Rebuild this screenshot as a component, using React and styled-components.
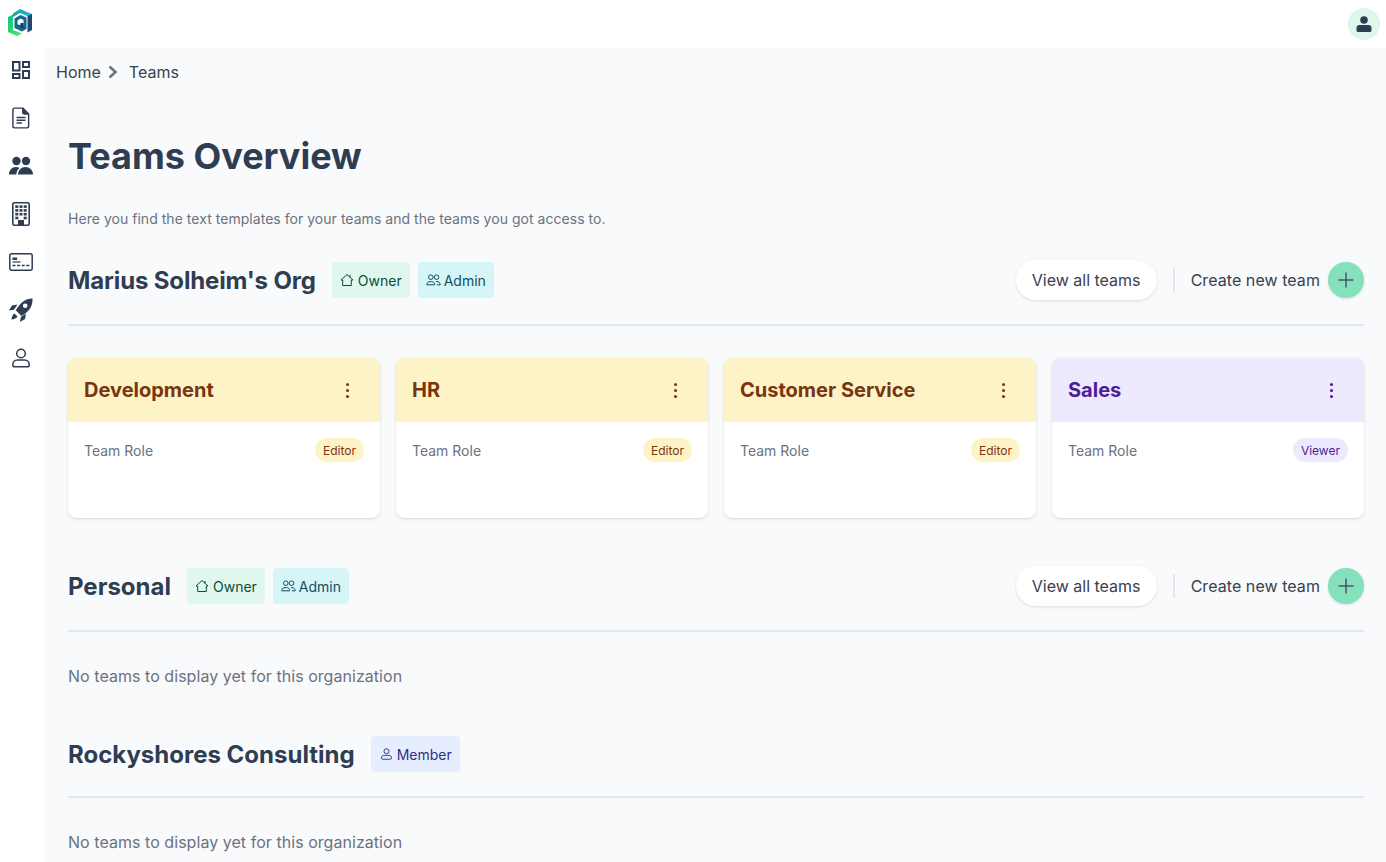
import React from "react";
import styled, { createGlobalStyle } from "styled-components";

const GlobalStyle = createGlobalStyle`
  html, body {
    margin: 0;
    padding: 0;
    height: 862px;
    overflow: hidden;
    background: #ffffff;
    font-family: Inter, "Liberation Sans", sans-serif;
  }
`;

const ROLE_COLORS = {
  Editor: { bg: "#fef3c7", fg: "#78350f" },
  Viewer: { bg: "#ede9fe", fg: "#4c1d95" },
};

const PILL_COLORS = {
  owner: { bg: "#e0f7ed", fg: "#064e3b" },
  admin: { bg: "#d5f5f6", fg: "#164e63" },
  member: { bg: "#e5edff", fg: "#312e81" },
};

const ICON_COLOR = "#2f3d52";

function Logo() {
  return (
    <svg width="24" height="27" viewBox="0 0 24 27">
      <defs>
        <linearGradient id="logoGreen" x1="0" y1="0" x2="0.6" y2="1">
          <stop offset="0" stopColor="#14b8a6" />
          <stop offset="0.5" stopColor="#22d36b" />
          <stop offset="1" stopColor="#4ade80" />
        </linearGradient>
        <linearGradient id="logoTeal" x1="0" y1="0" x2="1" y2="0.4">
          <stop offset="0" stopColor="#0ea5a4" />
          <stop offset="1" stopColor="#22b8cf" />
        </linearGradient>
      </defs>
      <path d="M0 8 L5 5.500 L5 21 L14 24.500 L9 27 L0 23 Z" fill="url(#logoGreen)" />
      <path d="M5 4.500 L12 0 L24 5 L24 9 L18 6.500 L12 4 L5 8 Z" fill="url(#logoTeal)" />
      <path d="M19.500 7 L24 5 L24 21 L19.500 23.500 Z" fill="#1b4a72" />
      <path d="M6.500 9.500 L12.500 6 L18.500 8.500 L18.500 20 L14 22.500 L6.500 19 Z" fill="#12698a" />
      <path d="M9.500 11.500 L12.500 9.500 L15.500 11 L15.500 16.500 L9.500 15.500 Z" fill="#ffffff" />
      <path d="M12.500 14 L15.500 14 L15.500 19.500 L12.500 18 Z" fill="#17375e" />
    </svg>
  );
}

function DashboardIcon() {
  return (
    <svg width="18" height="18" viewBox="0 0 18 18" fill="none" stroke={ICON_COLOR} strokeWidth="2">
      <rect x="1" y="1" width="6.500" height="8.500" />
      <rect x="11" y="1" width="6" height="5" />
      <rect x="1" y="13" width="6.500" height="4" />
      <rect x="11" y="10" width="6" height="7" />
    </svg>
  );
}

function DocumentIcon() {
  return (
    <svg width="18" height="22" viewBox="0 0 20 24" fill="none" stroke={ICON_COLOR} strokeWidth="1.600" strokeLinejoin="round">
      <path d="M3 1h9l6.500 6.500V21a2 2 0 0 1-2 2H3a2 2 0 0 1-2-2V3a2 2 0 0 1 2-2z" />
      <path d="M12 1v4.500a2 2 0 0 0 2 2h4.500" fill={ICON_COLOR} />
      <path d="M5 11.500h10M5 14.500h10M5 17.500h6" />
    </svg>
  );
}

function PeopleIcon() {
  return (
    <svg width="24" height="20" viewBox="0 0 24 20" fill={ICON_COLOR}>
      <circle cx="7.500" cy="5" r="4.200" />
      <circle cx="17" cy="5" r="4.200" />
      <path d="M0 18.500c0-4.200 2.800-7.500 7-7.500 1.400 0 2.600.4 3.600 1-2 1.500-3.200 3.800-3.200 6.500z" />
      <path d="M9 18.500c0-4.200 3.300-7.500 7.500-7.500s7.500 3.300 7.500 7.500z" />
    </svg>
  );
}

function BuildingIcon() {
  const windows = [];
  for (let row = 0; row < 4; row++) {
    for (let col = 0; col < 3; col++) {
      if (row === 3 && col === 1) continue;
      windows.push(<rect key={`${row}-${col}`} x={3.300 + col * 4.200} y={3.300 + row * 3.800} width="3" height="2.600" />);
    }
  }
  return (
    <svg width="18" height="24" viewBox="0 0 18 24" fill={ICON_COLOR}>
      <rect x="0.800" y="0.800" width="16.400" height="22.400" rx="1.500" fill="none" stroke={ICON_COLOR} strokeWidth="1.600" />
      {windows}
      <rect x="6" y="18" width="6" height="5" />
    </svg>
  );
}

function CardIcon() {
  return (
    <svg width="24" height="18" viewBox="0 0 24 18" fill="none" stroke={ICON_COLOR}>
      <rect x="0.800" y="0.800" width="22.400" height="16.400" rx="2" strokeWidth="1.500" />
      <rect x="3.500" y="4.500" width="4.500" height="2.500" fill={ICON_COLOR} stroke="none" />
      <path d="M3.500 9h8" strokeWidth="1.200" />
      <path d="M3.500 12.500h17" strokeWidth="1.300" strokeDasharray="3 1.600" />
    </svg>
  );
}

function RocketIcon() {
  return (
    <svg width="24" height="24" viewBox="0 0 24 24" fill={ICON_COLOR}>
      <path fillRule="evenodd" d="M23.500 0.500c.3 5.500-1.500 10-6 14l-5 3.500-5.800-5.800L10.500 7c3.800-4.600 7.800-6.800 13-6.500zM16.200 5.500a2.300 2.300 0 1 0 .01 4.600 2.300 2.300 0 0 0-.01-4.600z" />
      <path d="M8.500 6.500 3 7.500 0 12.500l5-.8zM17 15.500l-1 5.500-5 3 .8-5z" />
      <path d="M5.500 15.500l3 3c-1 1.800-3.500 2.800-6 3 .2-2.500 1.200-5 3-6z" />
    </svg>
  );
}

function PersonOutlineIcon() {
  return (
    <svg width="18" height="20" viewBox="0 0 18 20" fill="none" stroke={ICON_COLOR} strokeWidth="1.500">
      <circle cx="9" cy="5.500" r="4.300" />
      <path d="M5.500 12h7c2.800 0 4.700 2 4.700 4.500v.5c0 1-.8 1.800-1.800 1.800H2.600c-1 0-1.800-.8-1.800-1.800v-.5C.8 14 2.700 12 5.500 12z" />
    </svg>
  );
}

function HomeGlyph() {
  return (
    <svg width="14" height="14" viewBox="1 0 14 14" fill="none" stroke="currentColor" strokeWidth="1" strokeLinejoin="round" overflow="visible">
      <path d="M1 7 7 1.500 13 7h-1.700v5.500H2.700V7z" />
      <path d="M10 2v2.500" />
    </svg>
  );
}

function GroupGlyph() {
  return (
    <svg width="15" height="12" viewBox="0 0 15 12" fill="none" stroke="currentColor" strokeWidth="1">
      <circle cx="4.800" cy="3.200" r="2.300" />
      <circle cx="10.500" cy="3.200" r="2.300" />
      <path d="M.8 10.800c0-2 1.300-3.200 3.200-3.200h1.500c1.900 0 3.200 1.200 3.200 3.200zM10 7.600h1c1.900 0 3.200 1.200 3.200 3.200H11" />
    </svg>
  );
}

function PersonGlyph() {
  return (
    <svg width="11" height="12" viewBox="0 0 12 13" fill="none" stroke="currentColor" strokeWidth="1">
      <circle cx="6" cy="3.500" r="2.700" />
      <path d="M3.500 8h5c1.700 0 3 1.200 3 2.800 0 .8-.5 1.400-1.300 1.400H1.800C1 12.200.5 11.600.5 10.800.5 9.200 1.800 8 3.500 8z" />
    </svg>
  );
}

const PILL_ICONS = {
  owner: <HomeGlyph />,
  admin: <GroupGlyph />,
  member: <PersonGlyph />,
};

const PILL_LABELS = { owner: "Owner", admin: "Admin", member: "Member" };

const SIDEBAR_ICONS = [
  <DashboardIcon key="dashboard" />,
  <DocumentIcon key="document" />,
  <PeopleIcon key="people" />,
  <BuildingIcon key="building" />,
  <CardIcon key="card" />,
  <RocketIcon key="rocket" />,
  <PersonOutlineIcon key="person" />,
];

const TEAMS = [
  { name: "Development", role: "Editor", tone: "yellow" },
  { name: "HR", role: "Editor", tone: "yellow" },
  { name: "Customer Service", role: "Editor", tone: "yellow" },
  { name: "Sales", role: "Viewer", tone: "purple" },
];

function RolePill({ kind }) {
  return (
    <Pill $kind={kind}>
      <PillIcon>{PILL_ICONS[kind]}</PillIcon>
      {PILL_LABELS[kind]}
    </Pill>
  );
}

function SectionHeader({ title, pills, actions, tight }) {
  return (
    <HeaderRow>
      <OrgTitle $tight={tight}>{title}</OrgTitle>
      <PillGroup>
        {pills.map((kind) => (
          <RolePill key={kind} kind={kind} />
        ))}
      </PillGroup>
      {actions && (
        <Actions>
          <ViewButton>View all teams</ViewButton>
          <ActionDivider />
          <CreateLabel>Create new team</CreateLabel>
          <PlusButton>
            <svg width="16" height="16" viewBox="0 0 16 16" stroke="#475569" strokeWidth="1.500">
              <path d="M8 .5v15M.5 8h15" />
            </svg>
          </PlusButton>
        </Actions>
      )}
    </HeaderRow>
  );
}

function TeamCard({ team }) {
  const yellow = team.tone === "yellow";
  return (
    <Card>
      <CardHead $yellow={yellow}>
        <CardTitle>{team.name}</CardTitle>
        <Dots>
          <span />
          <span />
          <span />
        </Dots>
      </CardHead>
      <CardBody>
        <RoleLabel>Team Role</RoleLabel>
        <RoleBadge $role={team.role}>{team.role}</RoleBadge>
      </CardBody>
    </Card>
  );
}

export default function App() {
  return (
    <>
      <GlobalStyle />
      <Shell>
        <TopBar>
          <LogoSlot>
            <Logo />
          </LogoSlot>
          <Avatar>
            <svg width="16" height="16" viewBox="0 0 16 16" fill={ICON_COLOR}>
              <circle cx="8" cy="4" r="3.800" />
              <path d="M3.500 9h9c1.800 0 3 1.300 3 3v2.200c0 1-.7 1.800-1.700 1.800H2.200C1.200 16 .5 15.200.5 14.200V12c0-1.700 1.200-3 3-3z" />
            </svg>
          </Avatar>
        </TopBar>
        <Columns>
          <Sidebar>
            {SIDEBAR_ICONS.map((icon) => (
              <SideItem key={icon.key}>{icon}</SideItem>
            ))}
          </Sidebar>
          <Main>
            <Breadcrumb>
              <span>Home</span>
              <svg width="12" height="14" viewBox="0 0 12 14" fill="none" stroke="#6b7280" strokeWidth="2.500">
                <path d="M2.500 1.500 8.500 7l-6 5.500" />
              </svg>
              <span>Teams</span>
            </Breadcrumb>
            <Content>
              <PageTitle>Teams Overview</PageTitle>
              <Intro>Here you find the text templates for your teams and the teams you got access to.</Intro>

              <SectionHeader title="Marius Solheim's Org" pills={["owner", "admin"]} actions tight />
              <CardGrid>
                {TEAMS.map((team) => (
                  <TeamCard key={team.name} team={team} />
                ))}
              </CardGrid>

              <SectionHeader title="Personal" pills={["owner", "admin"]} actions />
              <EmptyText>No teams to display yet for this organization</EmptyText>

              <SectionHeader title="Rockyshores Consulting" pills={["member"]} />
              <EmptyText>No teams to display yet for this organization</EmptyText>
            </Content>
          </Main>
        </Columns>
      </Shell>
    </>
  );
}

const Shell = styled.div`
  height: 862px;
  display: flex;
  flex-direction: column;
  overflow: hidden;
`;

const TopBar = styled.header`
  height: 48px;
  flex: none;
  display: flex;
  align-items: center;
  justify-content: space-between;
  padding: 0 6px 0 8px;
  background: #ffffff;
`;

const LogoSlot = styled.div`
  display: flex;
  margin-top: -3px;
`;

const Avatar = styled.div`
  width: 32px;
  height: 32px;
  border-radius: 50%;
  background: #def7ec;
  display: flex;
  align-items: center;
  justify-content: center;
`;

const Columns = styled.div`
  flex: 1;
  display: flex;
  min-height: 0;
`;

const Sidebar = styled.nav`
  width: 44px;
  flex: none;
  background: #ffffff;
  display: flex;
  flex-direction: column;
  align-items: center;
  margin-top: -2px;
`;

const SideItem = styled.div`
  width: 44px;
  height: 48px;
  display: flex;
  align-items: center;
  justify-content: center;
  padding-right: 2px;
  box-sizing: border-box;
`;

const Main = styled.main`
  flex: 1;
  background: #f9fafb;
  min-width: 0;
`;

const Breadcrumb = styled.div`
  height: 48px;
  padding-left: 12px;
  display: flex;
  align-items: center;
  gap: 6px;
  font-size: 16px;
  color: #374151;

  svg {
    margin-right: 4px;
  }
`;

const Content = styled.div`
  padding: 0 22px 0 24px;
`;

const PageTitle = styled.h1`
  margin: 36px 0 0;
  font-size: 36px;
  line-height: 48px;
  font-weight: 700;
  color: #2f3d52;
`;

const Intro = styled.p`
  margin: 29px 0 31px;
  font-size: 14px;
  line-height: 20px;
  letter-spacing: 0.035px;
  color: #6b7280;
`;

const HeaderRow = styled.div`
  display: flex;
  align-items: center;
  padding-bottom: 24px;
  border-bottom: 2px solid #e2e8f0;
`;

const OrgTitle = styled.h2`
  margin: 2px 0 0;
  font-size: 24px;
  line-height: 32px;
  font-weight: 700;
  letter-spacing: ${({ $tight }) => ($tight ? "-0.15px" : "0")};
  color: #2f3d52;
`;

const PillGroup = styled.div`
  display: flex;
  gap: 8px;
  margin-left: 16px;
`;

const Pill = styled.div`
  height: 36px;
  padding: 0 8px;
  border-radius: 4px;
  display: flex;
  align-items: center;
  gap: 2px;
  font-size: 14px;
  background: ${({ $kind }) => PILL_COLORS[$kind].bg};
  color: ${({ $kind }) => PILL_COLORS[$kind].fg};
`;

const PillIcon = styled.span`
  width: 16px;
  height: 16px;
  display: flex;
  align-items: center;
  justify-content: center;
`;

const Actions = styled.div`
  margin-left: auto;
  display: flex;
  align-items: center;
`;

const ViewButton = styled.button`
  height: 40px;
  width: 141px;
  padding: 0;
  border: none;
  border-radius: 20px;
  background: #ffffff;
  box-shadow: 0 1px 3px rgba(0, 0, 0, 0.12);
  font-family: inherit;
  font-size: 16px;
  color: #374151;
`;

const ActionDivider = styled.div`
  width: 2px;
  height: 24px;
  margin: 0 16px;
  background: #e5e7eb;
`;

const CreateLabel = styled.span`
  font-size: 16px;
  letter-spacing: 0.06px;
  color: #374151;
`;

const PlusButton = styled.div`
  width: 36px;
  height: 36px;
  margin-left: 8px;
  border-radius: 50%;
  background: #84e1bc;
  box-shadow: 0 1px 3px rgba(0, 0, 0, 0.12);
  display: flex;
  align-items: center;
  justify-content: center;
`;

const CardGrid = styled.div`
  display: grid;
  grid-template-columns: repeat(4, 1fr);
  gap: 16px;
  margin: 32px 0 48px;
`;

const Card = styled.article`
  height: 160px;
  border-radius: 8px;
  background: #ffffff;
  box-shadow: 0 1px 3px rgba(0, 0, 0, 0.14);
  overflow: hidden;
`;

const CardHead = styled.div`
  height: 64px;
  padding: 0 31px 0 16px;
  display: flex;
  align-items: center;
  justify-content: space-between;
  background: ${({ $yellow }) => ($yellow ? "#fef3c7" : "#ede9fe")};
  color: ${({ $yellow }) => ($yellow ? "#78350f" : "#4c1d95")};
`;

const CardTitle = styled.h3`
  margin: 0;
  font-size: 20px;
  line-height: 28px;
  font-weight: 700;
`;

const Dots = styled.div`
  display: flex;
  flex-direction: column;
  gap: 3px;

  span {
    width: 3px;
    height: 3px;
    border-radius: 50%;
    background: currentColor;
  }
`;

const CardBody = styled.div`
  padding: 16px;
  display: flex;
  align-items: center;
  justify-content: space-between;
`;

const RoleLabel = styled.span`
  font-size: 14px;
  color: #6b7280;
`;

const RoleBadge = styled.span`
  height: 24px;
  padding: 0 8px;
  border-radius: 12px;
  display: flex;
  align-items: center;
  font-size: 12px;
  background: ${({ $role }) => ROLE_COLORS[$role].bg};
  color: ${({ $role }) => ROLE_COLORS[$role].fg};
`;

const EmptyText = styled.p`
  margin: 32px 0 48px;
  font-size: 16px;
  line-height: 24px;
  letter-spacing: 0.045px;
  color: #6b7280;
`;
